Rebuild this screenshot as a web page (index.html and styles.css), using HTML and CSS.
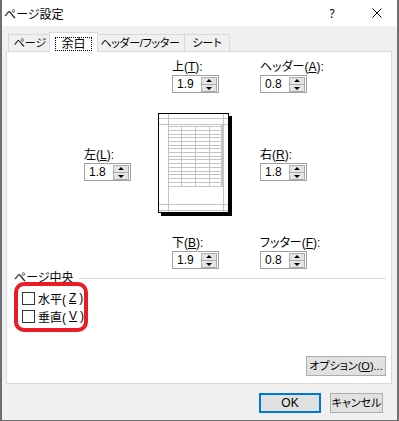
FILE: index.html
```html
<!DOCTYPE html>
<html lang="ja">
<head>
  <meta charset="UTF-8" />
  <meta name="viewport" content="width=device-width, initial-scale=1.0" />
  <title>ページ設定</title>
  <link rel="stylesheet" href="styles.css">
</head>
<body>
  <div class="window">
    <div class="titlebar">
      <span class="title">ページ設定</span>
      <span class="cap help">?</span>
      <span class="cap close">
        <svg width="10" height="10" viewBox="0 0 10 10"><path d="M0.5 0.5L9.5 9.5M9.5 0.5L0.5 9.5" stroke="#000" stroke-width="1"/></svg>
      </span>
    </div>

    <div class="client">
      <div class="tabs">
        <div class="tab t-page">ページ</div>
        <div class="tab t-margin active"><span class="focus">余白</span></div>
        <div class="tab t-header">ヘッダー/フッター</div>
        <div class="tab t-sheet">シート</div>
      </div>

      <div class="panel">
        <div class="margins">
          <div></div>
          <div class="field center">
            <label>上(<u>T</u>):</label>
            <div class="spin"><span>1.9</span><svg class="arrows" width="16" height="15" viewBox="0 0 16 15"><rect x="0.5" y="0.5" width="15" height="14" fill="#e5e5e5" stroke="#adadad"/><path d="M1 7.5H15" stroke="#adadad"/><path d="M5 5H11L8 2Z M5 10H11L8 13Z" fill="#000"/></svg></div>
          </div>
          <div class="field">
            <label>ヘッダー(<u>A</u>):</label>
            <div class="spin"><span>0.8</span><svg class="arrows" width="16" height="15" viewBox="0 0 16 15"><rect x="0.5" y="0.5" width="15" height="14" fill="#e5e5e5" stroke="#adadad"/><path d="M1 7.5H15" stroke="#adadad"/><path d="M5 5H11L8 2Z M5 10H11L8 13Z" fill="#000"/></svg></div>
          </div>

          <div class="field mid">
            <label>左(<u>L</u>):</label>
            <div class="spin"><span>1.8</span><svg class="arrows" width="16" height="15" viewBox="0 0 16 15"><rect x="0.5" y="0.5" width="15" height="14" fill="#e5e5e5" stroke="#adadad"/><path d="M1 7.5H15" stroke="#adadad"/><path d="M5 5H11L8 2Z M5 10H11L8 13Z" fill="#000"/></svg></div>
          </div>
          <svg class="preview" width="74" height="103" viewBox="0 0 74 103">
            <rect x="3" y="3" width="71" height="100" fill="#000"/>
            <rect x="0.5" y="0.5" width="70" height="99" fill="#fff" stroke="#000"/>
            <path d="M10.5 1V99M65.5 1V99M1 5.5H70M1 11.5H70M1 91.5H70M1 97.5H70" stroke="#c4c4c4"/>
            <path d="M10 13.5H64M10 17.5H64M10 21.5H64M10 24.5H64M10 28.5H64M10 32.5H64M10 35.5H64M10 39.5H64M10 43.5H64M10 46.5H64M10 50.5H64M10 54.5H64M10 58.5H64M10 61.5H64M10 65.5H64M10 69.5H64M10 73.5H64M23.5 13V74M37.5 13V74M51.5 13V74" stroke="#c4c4c4"/>
            <rect x="63" y="12" width="2" height="62" fill="#c4c4c4"/>
          </svg>
          <div class="field mid">
            <label>右(<u>R</u>):</label>
            <div class="spin"><span>1.8</span><svg class="arrows" width="16" height="15" viewBox="0 0 16 15"><rect x="0.5" y="0.5" width="15" height="14" fill="#e5e5e5" stroke="#adadad"/><path d="M1 7.5H15" stroke="#adadad"/><path d="M5 5H11L8 2Z M5 10H11L8 13Z" fill="#000"/></svg></div>
          </div>

          <div></div>
          <div class="field center">
            <label>下(<u>B</u>):</label>
            <div class="spin"><span>1.9</span><svg class="arrows" width="16" height="15" viewBox="0 0 16 15"><rect x="0.5" y="0.5" width="15" height="14" fill="#e5e5e5" stroke="#adadad"/><path d="M1 7.5H15" stroke="#adadad"/><path d="M5 5H11L8 2Z M5 10H11L8 13Z" fill="#000"/></svg></div>
          </div>
          <div class="field">
            <label>フッター(<u>F</u>):</label>
            <div class="spin"><span>0.8</span><svg class="arrows" width="16" height="15" viewBox="0 0 16 15"><rect x="0.5" y="0.5" width="15" height="14" fill="#e5e5e5" stroke="#adadad"/><path d="M1 7.5H15" stroke="#adadad"/><path d="M5 5H11L8 2Z M5 10H11L8 13Z" fill="#000"/></svg></div>
          </div>
        </div>

        <div class="group-head">ページ中央</div>
        <div class="highlight">
          <div class="check"><span class="box"></span>水平(<u>Z</u>)</div>
          <div class="check"><span class="box"></span>垂直(<u>V</u>)</div>
        </div>

        <div class="panel-foot">
          <button class="btn btn-option">オプション(<u>O</u>)...</button>
        </div>
      </div>

      <div class="actions">
        <button class="btn btn-ok">OK</button>
        <button class="btn btn-cancel">キャンセル</button>
      </div>
    </div>
  </div>
</body>
</html>
```

FILE: styles.css
```css
body {
  margin: 0;
  font-family: "Liberation Sans", "Noto Sans CJK JP", sans-serif;
  font-size: 12px;
  color: #000;
  background: #fff;
  font-feature-settings: "palt";
}
.window {
  width: 399px;
  height: 421px;
  box-sizing: border-box;
  border: 2px solid #6e6e6e;
  border-top: 0;
  border-bottom-width: 1px;
  background: #f0f0f0;
  display: flex;
  flex-direction: column;
}
.titlebar {
  height: 26px;
  background: #fff;
  display: flex;
  align-items: center;
}
.title {
  flex: 1;
  padding-left: 2px;
}
.cap {
  width: 40px;
  display: flex;
  justify-content: center;
  align-items: center;
}
.help {
  font-family: "Noto Sans", sans-serif;
  box-sizing: border-box;
  padding-right: 10px;
}
.client {
  flex: 1;
  display: flex;
  flex-direction: column;
  padding: 0 5px 0 4px;
}
.tabs {
  display: flex;
  align-items: flex-end;
  height: 25px;
  padding-left: 2px;
  font-size: 11px;
  white-space: nowrap;
}
.tab {
  height: 17px;
  box-sizing: border-box;
  border: 1px solid #d9d9d9;
  border-bottom: 0;
  margin-right: -1px;
  display: flex;
  align-items: center;
  justify-content: center;
  background: #f0f0f0;
  line-height: 14px;
}
.t-page { width: 44px; }
.t-margin { width: 45px; }
.t-header { width: 90px; letter-spacing: -0.3px; }
.t-sheet { width: 46px; }
.tab.active {
  width: 49px;
  height: 20px;
  margin: 0 -3px -1px -2px;
  padding-top: 2px;
  background: #fff;
  position: relative;
  z-index: 1;
  font-size: 12px;
}
.focus {
  outline: 1px dotted #000;
  padding: 0 5px;
  line-height: 12px;
}
.panel {
  height: 333px;
  box-sizing: border-box;
  background: #fff;
  border: 1px solid #d9d9d9;
  display: flex;
  flex-direction: column;
}
.margins {
  display: grid;
  grid-template-columns: 74px 102px 1fr;
  row-gap: 20px;
  margin: 8px 0 0 77px;
}
.field label {
  display: block;
  height: 14px;
  line-height: 14px;
  margin-bottom: 1px;
  white-space: nowrap;
}
.field.center { padding-left: 14px; }
.field.mid { align-self: center; }
.spin {
  width: 47px;
  height: 18px;
  box-sizing: border-box;
  border: 1px solid #a0a0a0;
  background: #fff;
  display: flex;
  align-items: center;
  justify-content: space-between;
  padding: 0 1px 0 4px;
  line-height: 14px;
}
.arrows { display: block; }
.preview { display: block; }
.group-head {
  display: flex;
  align-items: center;
  gap: 5px;
  margin: 2px 5px 0 7px;
  line-height: 14px;
}
.group-head::after {
  content: "";
  flex: 1;
  height: 1px;
  background: #dcdcdc;
}
.highlight {
  width: 74px;
  box-sizing: border-box;
  margin: -3px 0 0 7px;
  padding: 3px 0 3px 4px;
  border: 4px solid #ec1c24;
  border-radius: 10px;
}
.check {
  display: flex;
  align-items: center;
  gap: 3px;
  height: 18px;
  white-space: nowrap;
}
.box {
  width: 13px;
  height: 13px;
  box-sizing: border-box;
  border: 1px solid #333;
  background: #fff;
}
.panel-foot {
  margin-top: auto;
  display: flex;
  justify-content: flex-end;
  padding: 0 5px 7px 0;
}
.btn {
  height: 20px;
  box-sizing: border-box;
  border: 1px solid #adadad;
  background: #e1e1e1;
  font: inherit;
  font-size: 11px;
  color: #000;
  padding: 0;
  line-height: 16px;
  white-space: nowrap;
}
.btn-option { width: 80px; }
.actions {
  display: flex;
  justify-content: flex-end;
  gap: 9px;
  padding: 9px 9px 0 0;
}
.btn-ok {
  width: 62px;
  border: 2px solid #0078d7;
  font-size: 12px;
}
.btn-cancel { width: 53px; }
```
